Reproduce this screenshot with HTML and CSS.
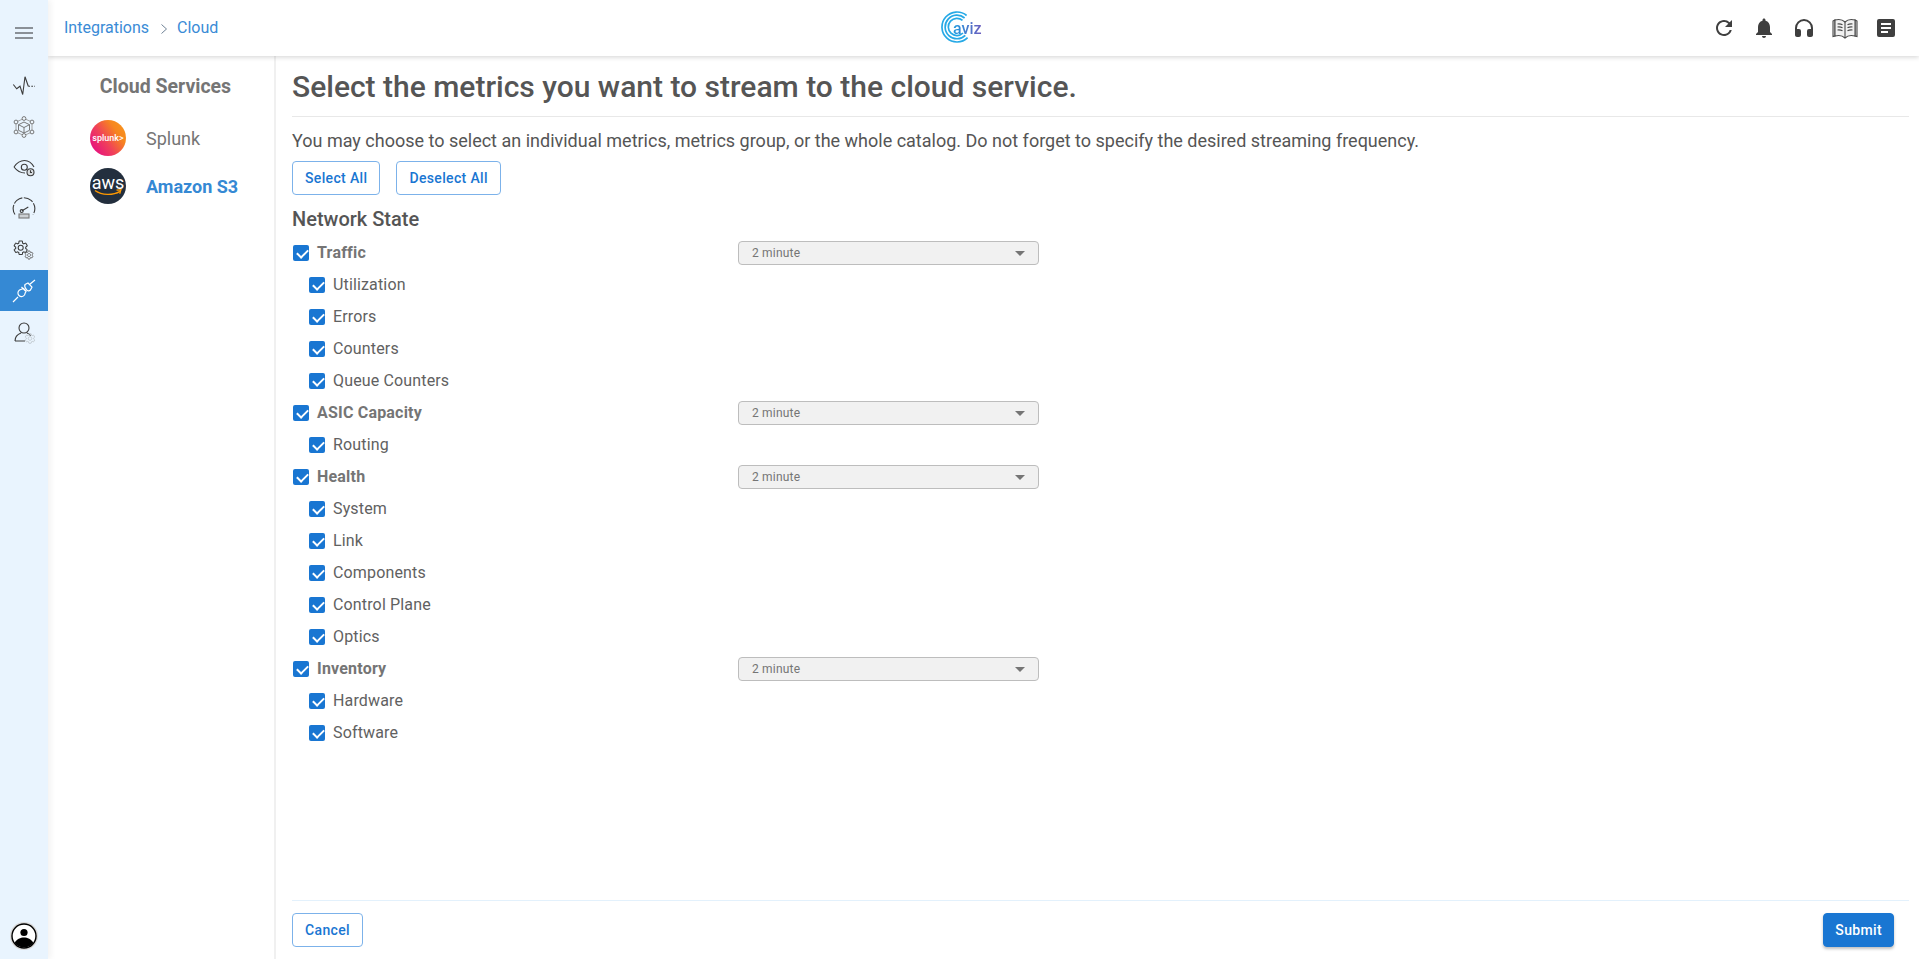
FILE: index.html
```html
<!DOCTYPE html>
<html lang="en">
<head>
<meta charset="utf-8">
<title>Integrations - Cloud</title>
<link rel="stylesheet" href="styles.css">
</head>
<body>
<svg class="defs" width="0" height="0"><defs><path id="gear" d="M19.14 12.94c.04-.3.06-.61.06-.94 0-.32-.02-.64-.07-.94l2.03-1.58a.49.49 0 0 0 .12-.61l-1.92-3.32a.488.488 0 0 0-.59-.22l-2.39.96c-.5-.38-1.03-.7-1.62-.94l-.36-2.54a.484.484 0 0 0-.48-.41h-3.84c-.24 0-.43.17-.47.41l-.36 2.54c-.59.24-1.13.57-1.62.94l-2.39-.96c-.22-.08-.47 0-.59.22L2.74 8.87c-.12.21-.08.47.12.61l2.03 1.58c-.05.3-.09.63-.09.94s.02.64.07.94l-2.03 1.58a.49.49 0 0 0-.12.61l1.92 3.32c.12.22.37.29.59.22l2.39-.96c.5.38 1.03.7 1.62.94l.36 2.54c.05.24.24.41.48.41h3.84c.24 0 .44-.17.47-.41l.36-2.54c.59-.24 1.13-.56 1.62-.94l2.39.96c.22.08.47 0 .59-.22l1.92-3.32c.12-.22.07-.47-.12-.61l-2.01-1.58zM12 15.6c-1.98 0-3.6-1.62-3.6-3.6s1.62-3.6 3.6-3.6 3.6 1.62 3.6 3.6-1.62 3.6-3.6 3.6z"/></defs></svg>
<aside class="sidebar">
  <div class="menu-btn">
    <svg class="burger" viewBox="0 0 20 14" width="20" height="14"><path d="M1 2h18M1 7h18M1 12h18" stroke="#6b6f75" stroke-width="1.7" fill="none"/></svg>
  </div>
  <nav class="nav">
    <div class="nav-item"><svg viewBox="0 0 24 24" width="24" height="24" fill="none" stroke="#3c3c3c" stroke-width="1.100"><path d="M1.300 10.500l3.400 4.300L8 12.200l2.700 8.300L13 2.800l3.300 9.400"/><path d="M16.300 12.200H23" stroke-dasharray="1.700 1.300"/></svg></div>
    <div class="nav-item"><svg viewBox="0 0 24 24" width="24" height="24" fill="none" stroke="#6a6a6a" stroke-width=".9"><path d="M12 3.500L20 7v10l-8 3.500L4 17V7z" stroke="#9a9a9a"/><path d="M12 7l5.500 2.700v5.600L12 18l-5.500-2.700V9.700zM6.500 9.700L12 12.500l5.500-2.800M12 12.500V18"/><g fill="#eef6fd"><circle cx="12" cy="3.500" r="1.900"/><circle cx="4" cy="7" r="1.900"/><circle cx="20" cy="7" r="1.900"/><circle cx="4" cy="17" r="1.900"/><circle cx="20" cy="17" r="1.900"/><circle cx="12" cy="20.500" r="1.900"/></g></svg></div>
    <div class="nav-item"><svg viewBox="0 0 24 24" width="24" height="24" fill="none" stroke="#3c3c3c" stroke-width="1.100"><path d="M2 11c3-4.500 6.500-6.500 10.500-6.500S19.500 6.500 22 11"/><path d="M2 11c3 4 6.500 6 11 6"/><circle cx="12.300" cy="11.200" r="3"/><circle cx="18.500" cy="16.200" r="3.500" fill="#d8dde1"/><path d="M18.500 14.200v2.300h1.500"/></svg></div>
    <div class="nav-item"><svg viewBox="0 0 24 24" width="24" height="24" fill="none" stroke="#3c3c3c" stroke-width="1.100"><path d="M3 17.500A10.800 10.800 0 1 1 21 17.500" stroke-dasharray="10 1.500"/><path d="M9.700 14l6.600-4"/><circle cx="9.700" cy="14" r="1.500"/><rect x="7" y="17" width="10" height="4" fill="#ccd0d4" stroke="#777"/></svg></div>
    <div class="nav-item"><svg viewBox="0 0 24 24" width="24" height="24" fill="none"><use href="#gear" transform="translate(.3 1.400) scale(.7)" stroke="#3c3c3c" stroke-width="1.500"/><use href="#gear" transform="translate(12 12) scale(.42)" stroke="#666" stroke-width="2.200"/></svg></div>
    <div class="nav-item active"><svg viewBox="0 0 24 24" width="24" height="24" fill="none" stroke="#fff" stroke-width="1.200"><path d="M1 23l5-5M23 1l-5.500 4.500"/><path d="M11.500 9.500l-4 1.500c-2 1.500-2 4-.5 5.500s4 1.500 5.500-.5l1.500-4zM9.500 8l2.500 2.500M14.500 13L12 10.500"/><path d="M13 5.500l3-1.500 4 4-1.500 3c-1.500 1.500-3 1-4-.3s-2.500-3-1.500-5.200z"/></svg></div>
    <div class="nav-item"><svg viewBox="0 0 24 24" width="24" height="24" fill="none" stroke="#3c3c3c" stroke-width="1.100"><circle cx="12" cy="8" r="5"/><path d="M3 21c0-4 2.500-6.700 6-8M3 21h10M15 13c1.500.6 2.800 1.500 3.600 2.600"/><use href="#gear" transform="translate(12 12.500) scale(.5)" stroke="#c4ccd2" stroke-width="2"/></svg></div>
  </nav>
  <div class="avatar">
    <svg viewBox="0 0 28 28" width="28" height="28"><circle cx="14" cy="14" r="14" fill="#d9d9d9"/><circle cx="14" cy="14" r="12" fill="#fff" stroke="#000" stroke-width="1.400"/><circle cx="14" cy="10.500" r="3.600" fill="#000"/><path d="M4.600 21c2-4 6-5.500 9.400-5.500s7.400 1.500 9.400 5.500a12 12 0 0 1-18.800 0z" fill="#000"/></svg>
  </div>
</aside>

<div class="page">
  <header class="topbar">
    <div class="crumbs">
      <span>Integrations</span>
      <svg class="crumb-sep" viewBox="0 0 8 12" width="8" height="12"><path d="M1.500 1.500L6.500 6l-5 4.500" fill="none" stroke="#6f8296" stroke-width="1"/></svg>
      <span>Cloud</span>
    </div>
    <div class="logo">
      <svg viewBox="0 0 32 32" width="32" height="32" fill="none" stroke="#26a9e6" stroke-width="1.700"><path d="M25.600 4.500A15 15 0 1 0 26.600 26.600"/><path d="M23.600 7A11.800 11.800 0 1 0 24.300 24.300"/><path d="M21.500 9.400A8.600 8.600 0 1 0 22 22"/></svg>
      <span class="logo-text">aviz</span>
    </div>
    <div class="tools">
      <svg viewBox="0 0 24 24" width="24" height="24"><path fill="#3f3f3f" d="M17.650 6.350A7.958 7.958 0 0 0 12 4c-4.420 0-7.990 3.580-7.990 8s3.570 8 7.990 8c3.730 0 6.840-2.550 7.730-6h-2.080A5.990 5.990 0 0 1 12 18c-3.310 0-6-2.690-6-6s2.690-6 6-6c1.660 0 3.140.69 4.220 1.780L13 11h7V4l-2.350 2.350z"/></svg>
      <svg viewBox="0 0 24 24" width="24" height="24"><path fill="#3f3f3f" d="M12 22c1.100 0 2-.9 2-2h-4c0 1.100.9 2 2 2zm6-6v-5c0-3.070-1.630-5.640-4.500-6.320V4c0-.83-.67-1.500-1.500-1.500s-1.500.67-1.500 1.500v.68C7.640 5.360 6 7.920 6 11v5l-2 2v1h16v-1l-2-2z"/></svg>
      <svg viewBox="0 0 24 24" width="24" height="24"><path fill="#3f3f3f" d="M12 3a9 9 0 0 0-9 9v7c0 1.100.9 2 2 2h2a2 2 0 0 0 2-2v-4a2 2 0 0 0-2-2H5v-1a7 7 0 0 1 14 0v1h-2a2 2 0 0 0-2 2v4a2 2 0 0 0 2 2h2c1.100 0 2-.9 2-2v-7a9 9 0 0 0-9-9z"/></svg>
      <svg viewBox="0 0 26 24" width="26" height="24" fill="#e4e4e4" stroke="#4a4a4a" stroke-width="1.100"><path d="M1 5l2-1v16l-2 .5zM25 5l-2-1v16l2 .5z"/><path d="M13 6C10.500 3.500 6.500 3 3 4v16c3.500-1 7.500-.5 10 2 2.500-2.500 6.500-3 10-2V4c-3.500-1-7.500-.5-10 2z" fill="#f1f1f1"/><path d="M13 6v16M5.500 8c1.500-.2 3.500 0 5 .8M5.500 11c1.500-.2 3.500 0 5 .8M5.500 14c1.500-.2 3.500 0 5 .8M20.500 8c-1.500-.2-3.500 0-5 .8M20.500 11c-1.500-.2-3.500 0-5 .8M20.500 14c-1.500-.2-3.500 0-5 .8" fill="none"/></svg>
      <svg viewBox="0 0 24 24" width="24" height="24"><path fill="#3f3f3f" d="M19 3H5a2 2 0 0 0-2 2v14a2 2 0 0 0 2 2h14a2 2 0 0 0 2-2V5a2 2 0 0 0-2-2zm-5 14H7v-2h7v2zm3-4H7v-2h10v2zm0-4H7V7h10v2z"/></svg>
    </div>
  </header>

  <div class="body">
    <section class="services">
      <h2 class="services-title">Cloud Services</h2>
      <div class="service">
        <span class="badge badge-splunk">splunk&gt;</span>
        <span class="service-name">Splunk</span>
      </div>
      <div class="service">
        <span class="badge badge-aws">aws<svg class="smile" viewBox="0 0 28 8" width="28" height="8"><path d="M1 1.500c7 5 18 5 25 .8" fill="none" stroke="#f90" stroke-width="1.400"/><path d="M22.500 1.200l4.500-.4-1.300 4" fill="none" stroke="#f90" stroke-width="1.200"/></svg></span>
        <span class="service-name selected">Amazon S3</span>
      </div>
    </section>

    <main class="content">
      <h1 class="heading">Select the metrics you want to stream to the cloud service.</h1>
      <div class="scroll">
        <p class="intro">You may choose to select an individual metrics, metrics group, or the whole catalog. Do not forget to specify the desired streaming frequency.</p>
        <div class="actions">
          <button class="btn">Select All</button>
          <button class="btn">Deselect All</button>
        </div>
        <h3 class="section">Network State</h3>

        <div class="row group"><span class="check"></span><span class="label">Traffic</span><div class="select"><span>2 minute</span><i class="caret"></i></div></div>
        <div class="row sub"><span class="check"></span><span class="label">Utilization</span></div>
        <div class="row sub"><span class="check"></span><span class="label">Errors</span></div>
        <div class="row sub"><span class="check"></span><span class="label">Counters</span></div>
        <div class="row sub"><span class="check"></span><span class="label">Queue Counters</span></div>

        <div class="row group"><span class="check"></span><span class="label">ASIC Capacity</span><div class="select"><span>2 minute</span><i class="caret"></i></div></div>
        <div class="row sub"><span class="check"></span><span class="label">Routing</span></div>

        <div class="row group"><span class="check"></span><span class="label">Health</span><div class="select"><span>2 minute</span><i class="caret"></i></div></div>
        <div class="row sub"><span class="check"></span><span class="label">System</span></div>
        <div class="row sub"><span class="check"></span><span class="label">Link</span></div>
        <div class="row sub"><span class="check"></span><span class="label">Components</span></div>
        <div class="row sub"><span class="check"></span><span class="label">Control Plane</span></div>
        <div class="row sub"><span class="check"></span><span class="label">Optics</span></div>

        <div class="row group"><span class="check"></span><span class="label">Inventory</span><div class="select"><span>2 minute</span><i class="caret"></i></div></div>
        <div class="row sub"><span class="check"></span><span class="label">Hardware</span></div>
        <div class="row sub"><span class="check"></span><span class="label">Software</span></div>
      </div>
      <footer class="footer">
        <button class="btn">Cancel</button>
        <button class="btn primary">Submit</button>
      </footer>
    </main>
  </div>
</div>
</body>
</html>
```
FILE: styles.css
```css
* { box-sizing: border-box; }
html, body { height: 100%; }
body {
  margin: 0;
  display: flex;
  height: 959px;
  overflow: hidden;
  background: #fff;
  font-family: Roboto, "Liberation Sans", sans-serif;
  color: #555;
}
.defs { position: absolute; }
.sidebar {
  width: 48px;
  flex: none;
  background: #e9f4fe;
  display: flex;
  flex-direction: column;
  position: relative;
  z-index: 3;
  box-shadow: 3px 0 6px rgba(0,0,0,.05);
}
.menu-btn { height: 65px; display: flex; align-items: center; justify-content: center; }
.burger { display: block; }
.nav { display: flex; flex-direction: column; }
.nav-item { height: 41px; display: flex; align-items: center; justify-content: center; }
.nav-item.active { background: #3589d4; }
.avatar { margin-top: auto; height: 37px; display: flex; align-items: flex-start; justify-content: center; }
.page { flex: 1; min-width: 0; display: flex; flex-direction: column; }
.topbar {
  height: 56px;
  flex: none;
  padding: 0 16px;
  display: flex;
  align-items: center;
  position: relative;
  background: #fff;
  box-shadow: 0 1px 5px rgba(0,0,0,.18);
  z-index: 2;
}
.crumbs { display: flex; align-items: center; font-size: 16px; color: #3a8bd6; flex: 1; padding-bottom: 1px; }
.crumb-sep { margin: 2px 9px 0 11px; }
.logo { display: flex; align-items: center; width: 60px; position: absolute; left: 893px; top: 11px; }
.logo-text {
  font-size: 16px;
  font-weight: 500;
  margin-left: -20px;
  margin-top: 3px;
  background: linear-gradient(90deg, #1f9bdf, #6d5bbd);
  -webkit-background-clip: text;
  background-clip: text;
  color: transparent;
}
.tools { display: flex; align-items: center; gap: 16px; padding-right: 5px; }
.body { flex: 1; min-height: 0; display: flex; }
.services { width: 228px; flex: none; border-right: 2px solid #f0f0f0; padding: 19px 0 0 8px; }
.services-title { margin: 0 0 15px; font-size: 19.500px; line-height: 23px; font-weight: 700; color: #757575; text-align: center; padding-left: 1px; height: 24px; }
.service { height: 48px; display: flex; align-items: center; padding-left: 34px; gap: 20px; font-size: 18px; color: #757575; }
.badge { width: 36px; height: 36px; border-radius: 50%; flex: none; display: flex; flex-direction: column; align-items: center; justify-content: center; color: #fff; }
.badge-splunk { background: linear-gradient(55deg, #e6127f 12%, #f0405a 42%, #f7861e 72%, #f79a1e 100%); font-size: 9px; font-weight: 500; }
.badge-aws { background: #232f3e; font-size: 18px; line-height: 12px; padding-top: 1px; }
.smile { display: block; }
.service-name.selected { color: #3589d4; font-weight: 700; }
.content { flex: 1; min-width: 0; display: flex; flex-direction: column; padding: 0 10px 0 16px; }
.heading { margin: 0; height: 61px; padding-top: 13px; font-size: 30px; line-height: 36px; font-weight: 500; color: #555; border-bottom: 1px solid #e8e8e8; }
.scroll { flex: 1; min-height: 0; }
.intro { margin: 12px 0 0; font-size: 18px; line-height: 24px; color: #555; }
.actions { display: flex; gap: 16px; margin-top: 8px; }
.btn {
  height: 34px;
  padding: 0 12px;
  background: #fff;
  border: 1px solid #7cb2ea;
  border-radius: 4px;
  color: #1976d2;
  font: 500 14px Roboto, "Liberation Sans", sans-serif;
  letter-spacing: .35px;
}
.btn.primary { background: #1976d2; border-color: #1976d2; color: #fff; box-shadow: 0 2px 3px rgba(0,0,0,.25); padding: 0 11px; }
.section { margin: 12px 0 0; font-size: 20px; line-height: 24px; font-weight: 500; color: #555; height: 30px; }
.row { height: 32px; display: flex; align-items: center; font-size: 16px; }
.label { padding-bottom: 1px; }
.group .label { font-weight: 700; color: #757575; width: 421px; letter-spacing: .2px; }
.sub { padding-left: 16px; }
.sub .label { color: #616161; letter-spacing: .15px; }
.check {
  width: 16px;
  height: 16px;
  flex: none;
  margin-right: 8px;
  border-radius: 2px;
  background: #1976d2;
  position: relative;
  margin-left: 1px;
}
.check::after {
  content: "";
  position: absolute;
  left: 5.500px;
  top: 2px;
  width: 5px;
  height: 9px;
  border: solid #fff;
  border-width: 0 2px 2px 0;
  transform: rotate(45deg);
}
.select {
  width: 301px;
  height: 24px;
  background: #f1f1f1;
  border: 1px solid #bdbdbd;
  border-radius: 4px;
  display: flex;
  align-items: center;
  justify-content: space-between;
  padding: 0 13px;
  font-size: 12px;
  color: #757575;
  letter-spacing: .2px;
}
.caret { width: 0; height: 0; border: 5px solid transparent; border-top-color: #757575; border-bottom: 0; display: block; }
.footer { flex: none; height: 59px; border-top: 1px solid #e3f1fc; display: flex; justify-content: space-between; padding: 12px 15px 0 0; }
```
